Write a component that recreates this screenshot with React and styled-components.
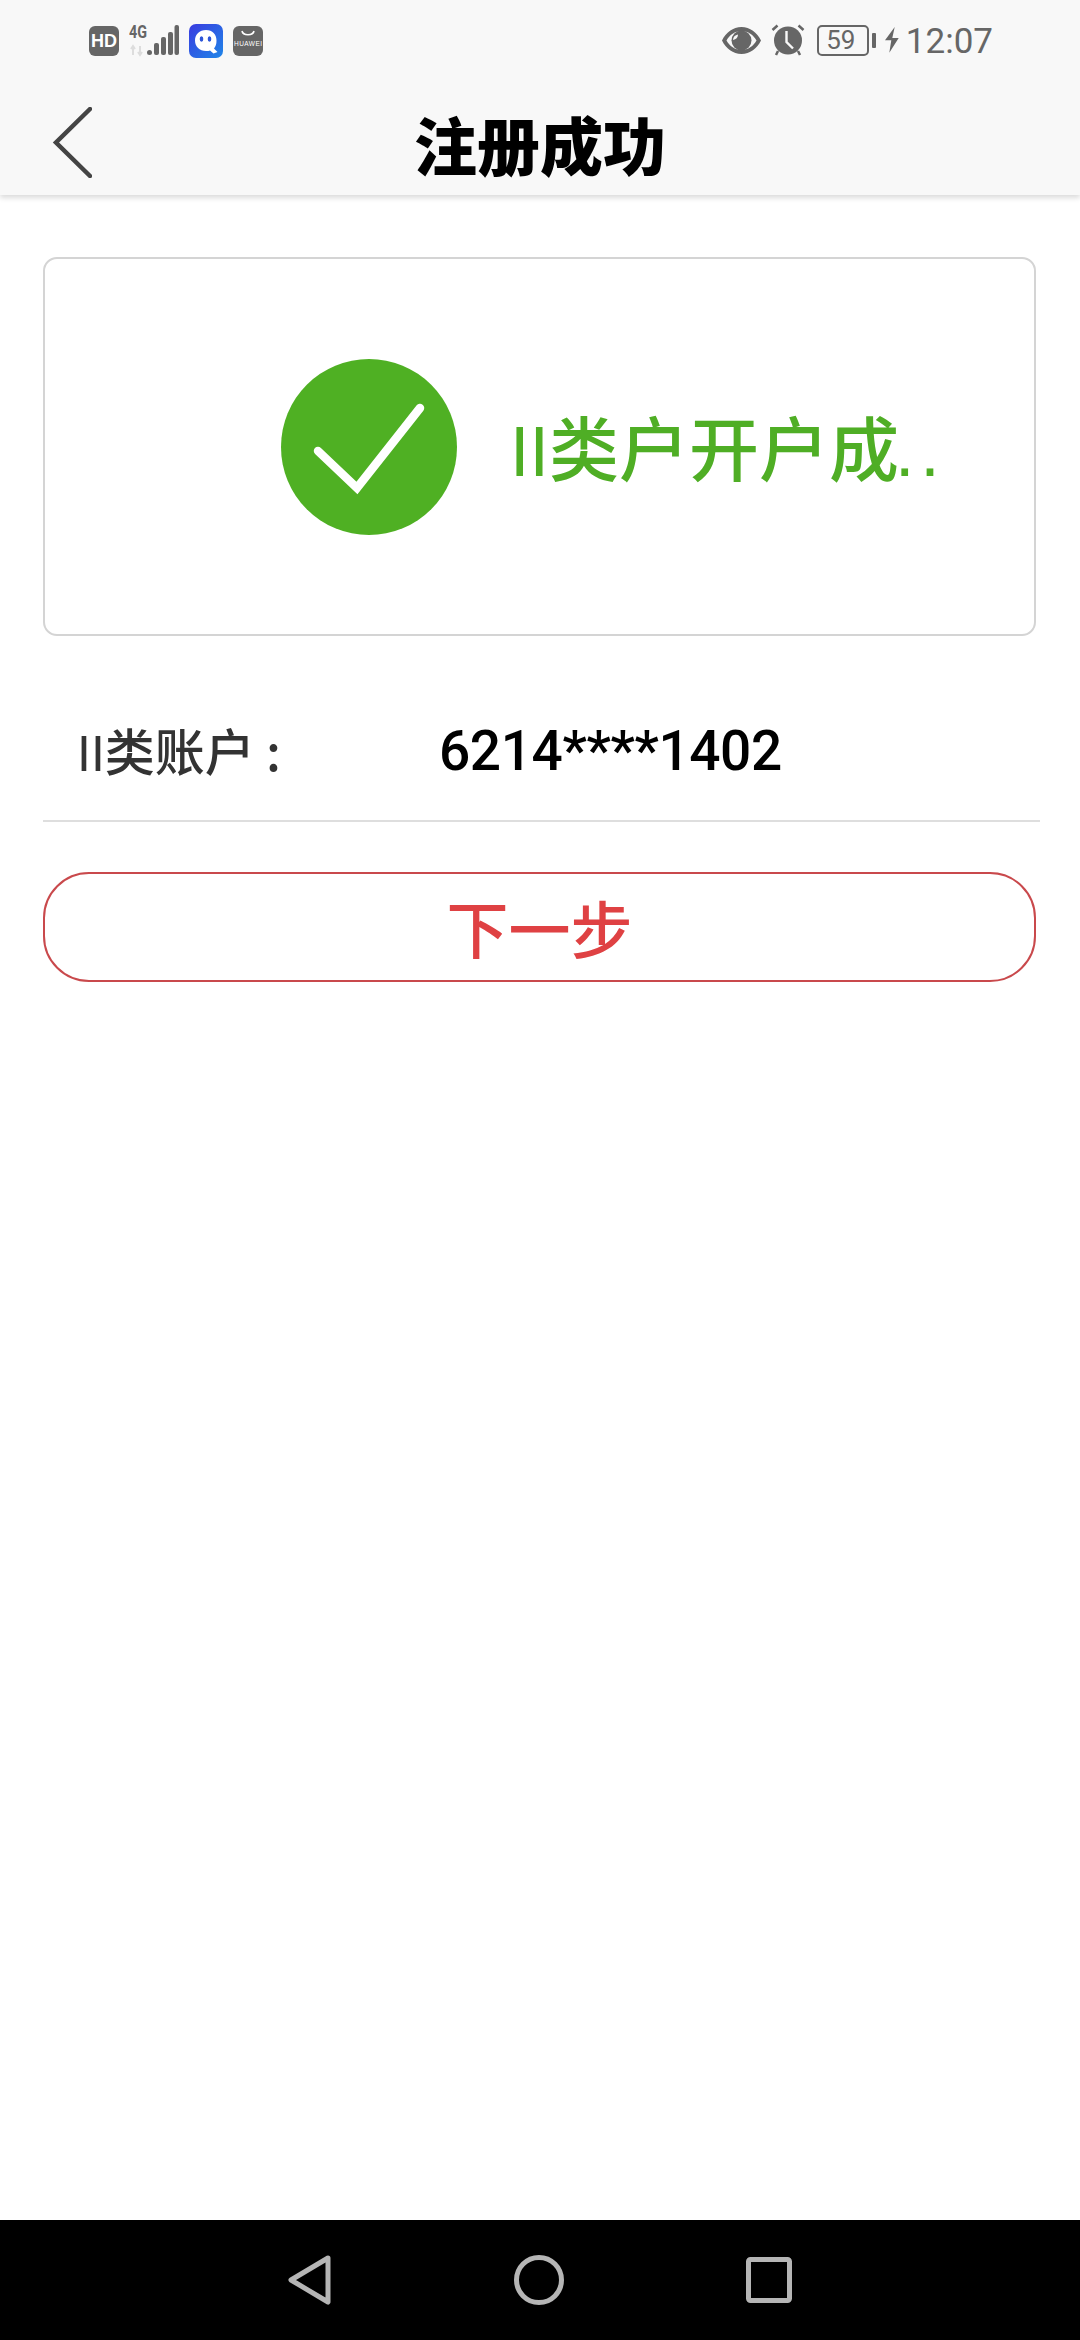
import React from 'react'
import styled, { createGlobalStyle } from 'styled-components'

const Global = createGlobalStyle`
  html, body {
    margin: 0;
    padding: 0;
    background: #fff;
  }
  * { box-sizing: border-box; }
  body {
    font-family: "Noto Sans", "Noto Sans CJK SC", sans-serif;
  }
`

const Page = styled.div`
  width: 1080px;
  height: 2340px;
  display: flex;
  flex-direction: column;
  overflow: hidden;
  background: #fff;
`

const TopArea = styled.header`
  height: 195px;
  flex: none;
  background: #f8f8f8;
  box-shadow: 0 3px 5px rgba(0, 0, 0, 0.14);
  display: flex;
  flex-direction: column;
`

const StatusBar = styled.div`
  height: 80px;
  padding: 24px 87px 0 89px;
  display: flex;
  justify-content: space-between;
  align-items: flex-start;
`

const StatusGroup = styled.div`
  display: flex;
  align-items: flex-start;
  gap: 10px;
`

const HdBadge = styled.div`
  width: 30px;
  height: 30px;
  margin-top: 2px;
  border-radius: 6px;
  background: #666;
  color: #fff;
  font: 700 18px/30px "Liberation Sans", sans-serif;
  text-align: center;
`

const Clock = styled.span`
  margin-left: -3px;
  color: #666;
  font: 400 35px/36px Roboto, sans-serif;
`

const BatteryBody = styled.div`
  width: 52px;
  height: 31px;
  margin: 1px 0 0 2px;
  border: 2px solid #666;
  border-radius: 5px;
  color: #666;
  font: 400 26px/27px Roboto, sans-serif;
  text-align: center;
  padding-right: 4px;
`

const BatteryTip = styled.div`
  width: 4px;
  height: 15px;
  margin: 9px 0 0 -7px;
  background: #666;
  border-radius: 1px;
`

const NavHeader = styled.div`
  flex: 1;
  display: grid;
  grid-template-columns: 1fr auto 1fr;
  align-items: center;
  padding: 10px 52px 0;
`

const Title = styled.h1`
  margin: 0;
  color: #000;
  font: 900 63px/80px "Noto Sans CJK SC", sans-serif;
`

const Content = styled.main`
  flex: 1;
  padding: 62px 40px 0 43px;
  display: flex;
  flex-direction: column;
`

const ResultCard = styled.section`
  width: 993px;
  height: 379px;
  border: 2px solid #d4d4d4;
  border-radius: 14px;
  padding-left: 236px;
  display: flex;
  align-items: center;
  gap: 53px;
`

const ResultText = styled.div`
  color: #4fae25;
  font: 500 70px/80px "Noto Sans CJK SC", sans-serif;
  white-space: nowrap;
  margin-top: 5px;
`

const Roman = styled.span`
  font-family: "Liberation Sans", sans-serif;
  font-weight: 400;
`

const Dots = styled.span`
  font-family: "Liberation Sans", sans-serif;
  letter-spacing: 6px;
  margin-left: -4px;
`

const AccountRow = styled.div`
  height: 186px;
  width: 997px;
  border-bottom: 2px solid #dedede;
  padding: 46px 0 0 34px;
  display: flex;
  align-items: center;
`

const Label = styled.span`
  width: 362px;
  flex: none;
  color: #333;
  font: 500 50px/60px "Noto Sans CJK SC", sans-serif;
`

const Value = styled.span`
  color: #000;
  font: 500 55px/60px Roboto, sans-serif;
  letter-spacing: -0.4px;
`

const NextButton = styled.button`
  width: 993px;
  height: 110px;
  margin-top: 50px;
  padding: 0;
  background: #fff;
  border: 2px solid #c9494c;
  border-radius: 46px;
  color: #df4143;
  font: 500 62px/1 "Noto Sans CJK SC", sans-serif;
`

const SystemNav = styled.nav`
  height: 120px;
  flex: none;
  background: #000;
  padding: 0 288px;
  display: flex;
  justify-content: space-between;
  align-items: center;
`

function SignalIcon() {
  return (
    <svg width="50" height="40" viewBox="0 -6 50 40" style={{ marginTop: -6 }}>
      <text x="0" y="14" fontFamily="Roboto, sans-serif" fontWeight="700" fontSize="19" fill="#666" textLength="18" lengthAdjust="spacingAndGlyphs">4G</text>
      <path d="M4 22v9M2 25l2-3 2 3M11 22v9M9 28l2 3 2-3" stroke="#ddd" strokeWidth="2" fill="none" />
      <rect x="18" y="26" width="5" height="5" rx="2.500" fill="#666" />
      <rect x="25" y="19" width="5" height="12" rx="2" fill="#666" />
      <rect x="32" y="13" width="5" height="18" rx="2" fill="#666" />
      <rect x="39" y="8" width="5" height="23" rx="2" fill="#666" />
      <rect x="45.500" y="1" width="4.500" height="30" rx="2" fill="#666" />
    </svg>
  )
}

function AppIcon() {
  return (
    <svg width="34" height="34" viewBox="0 0 34 34">
      <defs>
        <linearGradient id="appBg" x1="0" y1="0" x2="1" y2="1">
          <stop offset="0" stopColor="#3a3be0" />
          <stop offset="1" stopColor="#1f86e8" />
        </linearGradient>
      </defs>
      <rect width="34" height="34" rx="7" fill="url(#appBg)" />
      <path d="M17 6c-6.500 0-11 4.500-11 10.500S10.500 27 17 27c2 0 3-.3 4-.6l3.500 3.100 4-1.500-3.500-3.600c1.800-1.900 2.500-4.300 2.500-7.900C27.500 10.500 23.500 6 17 6z" fill="#fff" />
      <ellipse cx="12.500" cy="15" rx="1.800" ry="2.800" fill="#2d55d8" />
      <ellipse cx="20.500" cy="15" rx="1.800" ry="2.800" fill="#2d55d8" />
    </svg>
  )
}

function HuaweiIcon() {
  return (
    <svg width="30" height="30" viewBox="0 0 30 30" style={{ marginTop: 2 }}>
      <rect width="30" height="30" rx="6" fill="#666" />
      <path d="M9 5c1 5 11 5 12 0" stroke="#fff" strokeWidth="1.600" fill="none" />
      <text x="15" y="19.500" textAnchor="middle" fontFamily="Liberation Sans, sans-serif" fontSize="6.500" fill="#fff" textLength="28">HUAWEI</text>
    </svg>
  )
}

function EyeIcon() {
  return (
    <svg width="39" height="27" viewBox="0 0 39 27" style={{ marginTop: 3 }}>
      <path fillRule="evenodd" d="M19.500 0C11 0 4 5.500 0 13.500 4 21.500 11 27 19.500 27S35 21.500 39 13.500C35 5.500 28 0 19.500 0zM19.500 4C26 4 31.500 8 34.500 13.500 31.500 19 26 23 19.500 23S7.500 19 4.500 13.500C7.500 8 13 4 19.500 4z" fill="#666" />
      <circle cx="19.500" cy="13.500" r="10" fill="#666" />
      <path d="M11 13c0-3 2-5 5-5.500 0 3-2 5-5 5.500z" fill="#f8f8f8" />
    </svg>
  )
}

function AlarmIcon() {
  return (
    <svg width="34" height="32" viewBox="0 0 34 32">
      <circle cx="17" cy="16.500" r="14" fill="#666" />
      <path d="M1.500 6l5-4.500M32.500 6l-5-4.500" stroke="#666" strokeWidth="2.500" />
      <path d="M7 27l-2 4M27 27l2 4" stroke="#666" strokeWidth="2.500" />
      <path d="M15.500 7v11l6.500 6.500" stroke="#f8f8f8" strokeWidth="2.400" fill="none" />
    </svg>
  )
}

function BoltIcon() {
  return (
    <svg width="14" height="26" viewBox="0 0 14 26" style={{ marginTop: 3, marginLeft: -1 }}>
      <path d="M9.700 0L0 13.300h6.300L4.300 25.700 13.700 11H7.300z" fill="#666" />
    </svg>
  )
}

function BackIcon() {
  return (
    <svg width="40" height="71" viewBox="0 0 40 71">
      <path d="M38 2L4 35.500 38 69" stroke="#444" strokeWidth="4.500" fill="none" strokeLinecap="round" />
    </svg>
  )
}

function CheckCircle() {
  return (
    <svg width="176" height="176" viewBox="0 0 176 176">
      <circle cx="88" cy="88" r="88" fill="#4fb023" />
      <path d="M37 92l39 37 63-80" stroke="#fff" strokeWidth="8.500" fill="none" strokeLinecap="round" />
    </svg>
  )
}

export default function App() {
  return (
    <Page>
      <Global />
      <TopArea>
        <StatusBar>
          <StatusGroup>
            <HdBadge>HD</HdBadge>
            <SignalIcon />
            <AppIcon />
            <HuaweiIcon />
          </StatusGroup>
          <StatusGroup>
            <EyeIcon />
            <AlarmIcon />
            <BatteryBody>59</BatteryBody>
            <BatteryTip />
            <BoltIcon />
            <Clock>12:07</Clock>
          </StatusGroup>
        </StatusBar>
        <NavHeader>
          <BackIcon />
          <Title>注册成功</Title>
        </NavHeader>
      </TopArea>
      <Content>
        <ResultCard>
          <CheckCircle />
          <ResultText><Roman>II</Roman>类户开户成<Dots>..</Dots></ResultText>
        </ResultCard>
        <AccountRow>
          <Label><Roman>II</Roman>类账户 :</Label>
          <Value>6214****1402</Value>
        </AccountRow>
        <NextButton>下一步</NextButton>
      </Content>
      <SystemNav>
        <svg width="44" height="50" viewBox="0 0 44 50">
          <path d="M40 3L3 25l37 22z" stroke="#b5b5b5" strokeWidth="5" strokeLinejoin="round" fill="none" />
        </svg>
        <svg width="50" height="50" viewBox="0 0 50 50">
          <circle cx="25" cy="25" r="22.500" stroke="#b5b5b5" strokeWidth="5" fill="none" />
        </svg>
        <svg width="46" height="46" viewBox="0 0 46 46">
          <rect x="2.500" y="2.500" width="41" height="41" rx="2" stroke="#b5b5b5" strokeWidth="5" fill="none" />
        </svg>
      </SystemNav>
    </Page>
  )
}
